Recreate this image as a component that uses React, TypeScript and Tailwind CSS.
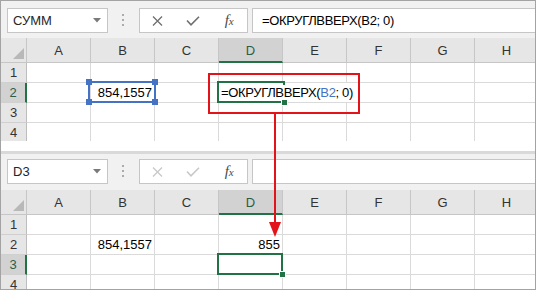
import type { ReactNode } from "react";

const COLS = ["A", "B", "C", "D", "E", "F", "G", "H"];

type CellSpec = {
  content?: ReactNode;
  align?: "left" | "right";
  wide?: boolean;
  selected?: "box" | "editor";
  refBox?: boolean;
};

const cx = (...c: (string | false | undefined)[]) => c.filter(Boolean).join(" ");

function XIcon({ color }: { color: string }) {
  return (
    <svg width="11" height="10" viewBox="0 0 11 10">
      <path d="M1 0.5 10 9.5M10 0.5 1 9.5" stroke={color} strokeWidth="1.3" fill="none" />
    </svg>
  );
}

function CheckIcon({ color }: { color: string }) {
  return (
    <svg width="14" height="10" viewBox="0 0 14 10">
      <path d="M1 4.5 5 8.8 13 0.8" stroke={color} strokeWidth="1.6" fill="none" />
    </svg>
  );
}

function Toolbar({ name, formula, editing, band }: { name: string; formula?: ReactNode; editing?: boolean; band?: boolean }) {
  const iconColor = editing ? "#6f6f6f" : "#c8c8c8";
  return (
    <div
      className={cx(
        "flex items-start bg-[#f1f1f1]",
        band ? "h-[39px] border-t-[3px] border-[#d9d9d9] pt-[5px]" : "h-[37px] pt-[7px]"
      )}
    >
      {/* поле имени */}
      <div className="ml-[6px] flex h-[25px] w-[101px] items-center justify-between border border-[#c6c6c6] bg-white pl-[5px] pr-[6px] text-[#262626]">
        <span>{name}</span>
        <svg width="8" height="5" viewBox="0 0 8 5">
          <path d="M0 0H8L4 4.5Z" fill="#7a7a7a" />
        </svg>
      </div>
      <div className="ml-[14px] mt-[6px] flex flex-col gap-[3px]">
        <span className="h-[2px] w-[2px] bg-[#ababab]" />
        <span className="h-[2px] w-[2px] bg-[#ababab]" />
        <span className="h-[2px] w-[2px] bg-[#ababab]" />
      </div>
      {/* кнопки ✕ ✓ fx */}
      <div className="ml-[15px] grid h-[25px] w-[109px] grid-cols-3 items-center justify-items-center border border-[#c6c6c6] bg-white">
        <XIcon color={iconColor} />
        <CheckIcon color={iconColor} />
        <span className="font-['Liberation_Serif',serif] text-[15px] italic leading-none text-[#4a4a4a]">
          f<span className="text-[11px]">x</span>
        </span>
      </div>
      <div className="ml-[4px] flex h-[25px] flex-1 items-center border-y border-l border-[#c6c6c6] bg-white pl-[9px]">
        {formula}
      </div>
    </div>
  );
}

function Cell({ spec }: { spec?: CellSpec }) {
  return (
    <div
      className={cx(
        "relative flex items-end border-r border-b border-[#dadada] pb-[1px] leading-[16px]",
        spec?.wide && "col-span-3 bg-white",
        spec?.align === "left" ? "justify-start pl-[2px]" : "justify-end pr-[2px]"
      )}
    >
      {spec?.content}
      {spec?.refBox && (
        <span className="absolute -left-[3px] -top-[2px] -right-[2px] -bottom-[1px] z-10 border-2 border-[#4472c4]">
          <span className="absolute -left-[4px] -top-[4px] h-[6px] w-[6px] bg-[#4472c4]" />
          <span className="absolute -right-[4px] -top-[4px] h-[6px] w-[6px] bg-[#4472c4]" />
          <span className="absolute -left-[4px] -bottom-[4px] h-[6px] w-[6px] bg-[#4472c4]" />
          <span className="absolute -right-[4px] -bottom-[4px] h-[6px] w-[6px] bg-[#4472c4]" />
        </span>
      )}
      {spec?.selected === "box" && (
        <span className="absolute -left-[2px] -top-[2px] -right-[1px] -bottom-[1px] z-10 border-2 border-[#217346]">
          <span className="absolute -right-[5px] -bottom-[5px] h-[7px] w-[7px] border border-white bg-[#217346]" />
        </span>
      )}
      {spec?.selected === "editor" && (
        <span className="absolute -left-[2px] -top-[2px] -bottom-[1px] z-10 w-[67px] border-y-2 border-l-2 border-[#217346]">
          <span className="absolute -right-[1px] -top-[2px] h-[4px] w-[2px] bg-[#217346]" />
          <span className="absolute -right-[4px] -bottom-[5px] h-[7px] w-[7px] border border-white bg-[#217346]" />
        </span>
      )}
    </div>
  );
}

function Sheet({ activeRow, cells }: { activeRow: number; cells: Record<string, CellSpec> }) {
  const rows = [1, 2, 3, 4];
  return (
    <div className="grid grid-cols-[26px_repeat(8,64px)] grid-rows-[25px] auto-rows-[20px] text-[13px]">
      <div className="relative border-r border-b border-[#c6c6c6] bg-[#e6e6e6]">
        <svg className="absolute right-[2px] bottom-[3px]" width="11" height="11" viewBox="0 0 11 11">
          <path d="M11 0V11H0Z" fill="#b8b8b8" />
        </svg>
      </div>
      {COLS.map((c) => (
        <div
          key={c}
          className={cx(
            "flex items-center justify-center border-r border-[#c6c6c6] pt-[2px]",
            c === "D" ? "border-b-2 border-b-[#217346] bg-[#d2d2d2] text-[#2f5d44]" : "border-b bg-[#e6e6e6] text-[#333]"
          )}
        >
          {c}
        </div>
      ))}
      {rows.map((r) => {
        const out: ReactNode[] = [
          <div
            key={`h${r}`}
            className={cx(
              "flex items-center justify-center border-b border-[#d0d0d0]",
              r === activeRow
                ? "border-r-2 border-r-[#217346] bg-[#d2d2d2] text-[#2f5d44]"
                : "border-r border-r-[#bdbdbd] bg-[#e6e6e6] text-[#333]"
            )}
          >
            {r}
          </div>,
        ];
        for (let i = 0; i < COLS.length; ) {
          const id = `${COLS[i]}${r}`;
          const spec = cells[id];
          out.push(<Cell key={id} spec={spec} />);
          i += spec?.wide ? 3 : 1;
        }
        return out;
      })}
    </div>
  );
}

const formulaText = (refColor: string) => (
  <span className="whitespace-nowrap tracking-[-0.35px]">
    =ОКРУГЛВВЕРХ(<span style={{ color: refColor }}>B2</span>; 0)
  </span>
);

export default function App() {
  return (
    <div className="relative h-[290px] w-[536px] overflow-hidden border border-[#a3a3a3] bg-white font-['Liberation_Sans',Arial,sans-serif] text-[13px] text-black">
      <div className="h-[140px] overflow-hidden">
        <Toolbar name="СУММ" editing formula={formulaText("#000")} />
        <Sheet
          activeRow={2}
          cells={{
            B2: { content: "854,1557", refBox: true },
            D2: { content: formulaText("#4472c4"), align: "left", wide: true, selected: "editor" },
          }}
        />
      </div>
      <div className="h-[10px]" />
      <div className="h-[138px] overflow-hidden">
        <Toolbar name="D3" band />
        <Sheet
          activeRow={3}
          cells={{
            B2: { content: "854,1557" },
            D2: { content: "855" },
            D3: { selected: "box" },
          }}
        />
      </div>

      {/* красная рамка и стрелка */}
      <div className="absolute left-[207px] top-[72px] h-[41px] w-[152px] border-2 border-[#e3131a]" />
      <svg className="absolute left-[267px] top-[112px]" width="16" height="126" viewBox="0 0 16 126">
        <path d="M7 0V110" stroke="#e3131a" strokeWidth="2" />
        <path d="M1 109H13L7 124Z" fill="#e3131a" />
      </svg>
    </div>
  );
}
